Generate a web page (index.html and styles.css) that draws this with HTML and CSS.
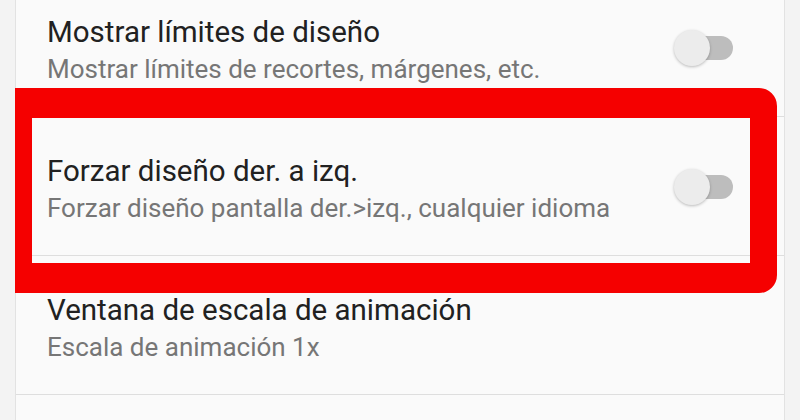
FILE: index.html
```html
<!DOCTYPE html>
<html lang="es">
<head>
    <meta charset="UTF-8">
    <meta name="viewport" content="width=device-width, initial-scale=1.0">
    <title>Opciones de desarrollador</title>
    <link rel="stylesheet" href="styles.css">
</head>
<body>
    <div class="list">
        <div class="row">
            <div class="text">
                <div class="title">Mostrar límites de diseño</div>
                <div class="summary">Mostrar límites de recortes, márgenes, etc.</div>
            </div>
            <div class="switch"><span class="thumb"></span></div>
        </div>
        <div class="row">
            <div class="text">
                <div class="title">Forzar diseño der. a izq.</div>
                <div class="summary">Forzar diseño pantalla der.&gt;izq., cualquier idioma</div>
            </div>
            <div class="switch"><span class="thumb"></span></div>
        </div>
        <div class="row">
            <div class="text">
                <div class="title">Ventana de escala de animación</div>
                <div class="summary">Escala de animación 1x</div>
            </div>
        </div>
        <div class="row-next"></div>
    </div>
    <div class="highlight"></div>
</body>
</html>
```

FILE: styles.css
```css
body {
    margin: 0;
    height: 420px;
    background-color: #f3f3f3;
    font-family: Roboto, "Noto Sans", sans-serif;
    overflow: hidden;
}
.list {
    margin: -22px 15px 0 15px;
    background-color: #fafafa;
    border-left: 1px solid #e2e2e2;
    border-right: 1px solid #e2e2e2;
}
.row {
    display: flex;
    align-items: center;
    height: 138px;
    padding: 0 51px 0 31px;
    border-bottom: 1px solid #dedede;
}
.row-next {
    height: 25px;
}
.text {
    flex: 1;
    align-self: flex-start;
    padding-top: 37px;
}
.title {
    font-size: 29.5px;
    line-height: 34px;
    color: #212121;
}
.summary {
    margin-top: 5px;
    font-size: 26px;
    line-height: 30px;
    color: #767676;
}
.switch {
    position: relative;
    width: 59px;
    height: 37px;
    margin-top: 3px;
}
.switch::before {
    content: "";
    position: absolute;
    left: 8px;
    right: 0;
    top: 6px;
    height: 24px;
    border-radius: 12px;
    background-color: #bdbdbd;
}
.thumb {
    position: absolute;
    left: 0;
    top: 0;
    width: 36px;
    height: 36px;
    border-radius: 50%;
    background-color: #ececec;
    box-shadow: 0 1px 3px rgba(0, 0, 0, 0.25);
}
.highlight {
    position: absolute;
    left: 15px;
    top: 88px;
    width: 718px;
    height: 145px;
    border-style: solid;
    border-color: #f50000;
    border-width: 30px 27px 30px 17px;
    border-radius: 0 18px 18px 0;
}
```
